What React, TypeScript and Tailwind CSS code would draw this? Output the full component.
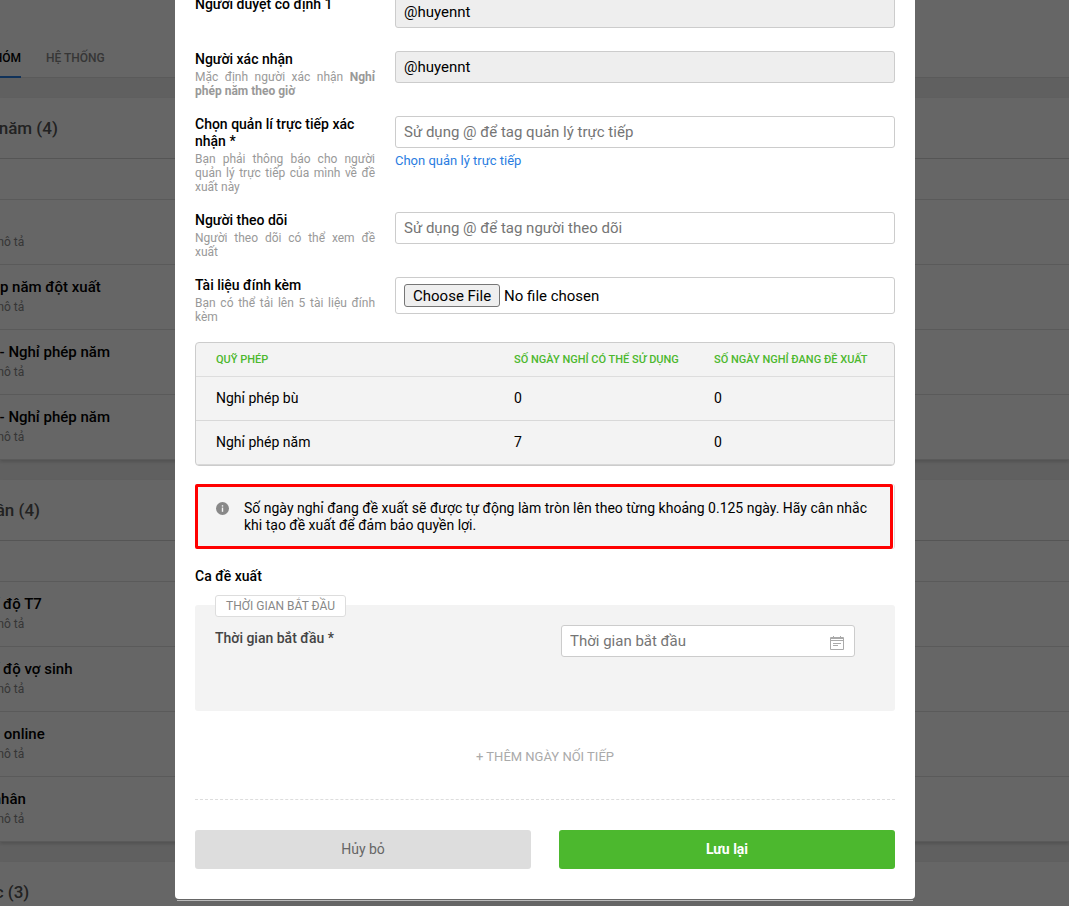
import type { ReactNode } from "react";

type Group = { title: string; items: string[] };

const groups: Group[] = [
  {
    title: "Nghỉ phép năm (4)",
    items: ["", "Nghỉ phép năm đột xuất", "Đi muộn - Nghỉ phép năm", "Đi muộn - Nghỉ phép năm"],
  },
  {
    title: "Việc cá nhân (4)",
    items: ["Nghỉ chế độ T7", "Nghỉ chế độ vợ sinh", "Làm việc online", "Việc cá nhân"],
  },
  { title: "Nhóm khác (3)", items: [] },
];

const funds = [
  { name: "Nghỉ phép bù", available: 0, requested: 0 },
  { name: "Nghỉ phép năm", available: 7, requested: 0 },
];

const field =
  "block h-8 w-full rounded-[3px] border border-[#ccc] px-2 text-[15px] text-black outline-none placeholder:text-[#757575]";

function GroupCard({ title, items }: Group) {
  return (
    <section className="mb-5 bg-white shadow-[0_2px_3px_rgba(0,0,0,0.15)]">
      <h2 className="flex h-[61px] items-center border-b border-[#d5d5d5] pt-0.5 text-[17px] font-medium text-[#555]">
        <span className="-ml-[83px] whitespace-nowrap">{title}</span>
      </h2>
      <div className="h-[41px] border-b border-[#e0e0e0]" />
      <ul>
        {items.map((name, i) => (
          <li key={i} className="h-[65px] border-b border-[#e0e0e0] pt-3">
            <div className="-ml-[60px] whitespace-nowrap">
              <div className="h-5 text-[15px] leading-5 font-medium text-black">{name}</div>
              <div className="text-xs leading-5 text-[#888]">Không có mô tả</div>
            </div>
          </li>
        ))}
      </ul>
    </section>
  );
}

function BackgroundPage() {
  return (
    <div className="absolute inset-0 overflow-hidden bg-[#f0f0f0]" aria-hidden="true">
      <nav className="mb-5 flex h-[78px] items-end border-b border-[#e0e0e0] bg-white text-xs font-medium">
        <a href="#group" tabIndex={-1} className="-mb-px -ml-[50px] flex h-10 w-[71px] items-center justify-end border-b-2 border-[#2a7de1] pt-0.5 whitespace-nowrap text-black">
          THEO NHÓM
        </a>
        <a href="#system" tabIndex={-1} className="-mb-px ml-[25px] flex h-10 items-center border-b-2 border-transparent pt-0.5 text-[#888]">
          HỆ THỐNG
        </a>
      </nav>
      {groups.map((g) => (
        <GroupCard key={g.title} {...g} />
      ))}
    </div>
  );
}

function Row({ id, label, hint, children }: { id: string; label: string; hint?: ReactNode; children: ReactNode }) {
  return (
    <div className="flex min-h-[55px] gap-5 pb-[18px]">
      <div className="w-[180px] shrink-0">
        <label htmlFor={id} className="block text-sm leading-[17px] font-medium text-black">
          {label}
        </label>
        {hint && <p className="mt-0.5 text-justify text-xs leading-[14px] text-[#999]">{hint}</p>}
      </div>
      <div className="min-w-0 flex-1">{children}</div>
    </div>
  );
}

function InfoIcon() {
  return (
    <svg className="mt-0.5 size-[13px] shrink-0" viewBox="0 0 13 13" aria-hidden="true">
      <circle cx="6.5" cy="6.5" r="6.5" fill="#888" />
      <rect x="5.8" y="3.2" width="1.4" height="1.4" fill="#f4f4f4" />
      <rect x="5.8" y="5.6" width="1.4" height="4.2" fill="#f4f4f4" />
    </svg>
  );
}

function CalendarIcon() {
  return (
    <svg className="size-4" viewBox="0 0 16 16" fill="none" stroke="#aaa" aria-hidden="true">
      <path d="M1.5 2.5h13v12h-13z" />
      <path d="M1 3.5h14M1 5.5h14" />
      <path d="M4.5 1v3M11.5 1v3" />
      <path d="M4 8.5h8M4 10.5h5" />
    </svg>
  );
}

function RequestForm() {
  return (
    <form
      role="dialog"
      aria-label="Tạo đề xuất"
      className="rounded-b-[4px] bg-white px-5 pb-[30px]"
      onSubmit={(e) => e.preventDefault()}
    >
      <Row id="approver" label="Người duyệt cố định 1">
        <input id="approver" className={`${field} bg-[#eee]`} defaultValue="@huyennt" readOnly />
      </Row>
      <Row
        id="confirmer"
        label="Người xác nhận"
        hint={
          <>
            Mặc định người xác nhận <b>Nghỉ phép năm theo giờ</b>
          </>
        }
      >
        <input id="confirmer" className={`${field} bg-[#eee]`} defaultValue="@huyennt" readOnly />
      </Row>
      <Row
        id="manager"
        label="Chọn quản lí trực tiếp xác nhận *"
        hint="Bạn phải thông báo cho người quản lý trực tiếp của mình về đề xuất này"
      >
        <input id="manager" className={`${field} bg-white`} placeholder="Sử dụng @ để tag quản lý trực tiếp" />
        <a href="#manager" className="mt-1 block text-[13px] leading-[18px] text-[#2a7de1]">
          Chọn quản lý trực tiếp
        </a>
      </Row>
      <Row id="follower" label="Người theo dõi" hint="Người theo dõi có thể xem đề xuất">
        <input id="follower" className={`${field} bg-white`} placeholder="Sử dụng @ để tag người theo dõi" />
      </Row>
      <Row id="files" label="Tài liệu đính kèm" hint="Bạn có thể tải lên 5 tài liệu đính kèm">
        <input
          id="files"
          type="file"
          className="block h-[37px] w-full rounded-[3px] border border-[#ccc] bg-white px-2 py-[6px] text-[15px] leading-[21px] text-black file:h-[23px] file:rounded-[3px] file:border file:border-solid file:border-[#767676] file:bg-[#efefef] file:px-2 file:pt-0.5 file:pb-0 file:leading-[19px]"
        />
      </Row>

      <div className="overflow-hidden rounded-[4px] border border-[#ccc] bg-[#f3f3f3]">
        <table className="w-full table-fixed border-separate border-spacing-0 text-left text-sm text-black">
          <thead>
            <tr className="text-[11px] font-medium text-[#4cb82e]">
              <th className="h-[34px] border-b border-[#ddd] pl-5 font-medium">QUỸ PHÉP</th>
              <th className="w-[200px] border-b border-[#ddd] font-medium">SỐ NGÀY NGHỈ CÓ THỂ SỬ DỤNG</th>
              <th className="w-[180px] border-b border-[#ddd] font-medium">SỐ NGÀY NGHỈ ĐANG ĐỀ XUẤT</th>
            </tr>
          </thead>
          <tbody>
            {funds.map((f) => (
              <tr key={f.name}>
                <td className="h-11 border-b border-[#d8d8d8] pb-0.5 pl-5">{f.name}</td>
                <td className="h-11 border-b border-[#d8d8d8] pb-0.5">{f.available}</td>
                <td className="h-11 border-b border-[#d8d8d8] pb-0.5">{f.requested}</td>
              </tr>
            ))}
          </tbody>
        </table>
      </div>

      <div className="mt-[18px] rounded-[3px] border-r border-[#ddd] pr-px">
        <div className="flex gap-[15px] rounded-[2px] border-3 border-[#f00] bg-[#f4f4f4] pt-[13px] pr-5 pb-3 pl-[18px] text-sm leading-[17px] text-black">
          <InfoIcon />
          <p>
            Số ngày nghỉ đang đề xuất sẽ được tự động làm tròn lên theo từng khoảng 0.125 ngày. Hãy cân nhắc khi tạo đề
            xuất để đảm bảo quyền lợi.
          </p>
        </div>
      </div>

      <h3 className="mt-[18px] text-sm leading-[18px] font-medium text-black">Ca đề xuất</h3>
      <div className="relative mt-5 flex h-[106px] items-start justify-between rounded-[3px] bg-[#f3f3f3] pt-5 pr-10 pl-5">
        <span className="absolute -top-[10px] left-5 rounded-[3px] border border-[#ddd] bg-white px-[10px] text-xs leading-5 text-[#888]">
          THỜI GIAN BẮT ĐẦU
        </span>
        <label htmlFor="start" className="pt-1 text-sm leading-[18px] font-medium text-[#444]">
          Thời gian bắt đầu *
        </label>
        <div className="relative w-[294px]">
          <input id="start" className={`${field} bg-white`} placeholder="Thời gian bắt đầu" />
          <span className="absolute top-[10px] right-[10px]">
            <CalendarIcon />
          </span>
        </div>
      </div>

      <div className="mt-9 flex justify-center border-b border-dashed border-[#ddd] pb-8">
        <button type="button" className="text-[13px] leading-5 text-[#aaa]">
          + THÊM NGÀY NỐI TIẾP
        </button>
      </div>

      <div className="mt-[30px] grid grid-cols-2 gap-7">
        <button type="button" className="h-[39px] rounded-[3px] bg-[#ddd] pb-0.5 text-sm text-[#666]">
          Hủy bỏ
        </button>
        <button type="submit" className="h-[39px] rounded-[3px] bg-[#4cb82e] pb-0.5 text-sm font-bold text-white">
          Lưu lại
        </button>
      </div>
    </form>
  );
}

export default function App() {
  return (
    <main className="relative h-screen overflow-hidden font-['Roboto',sans-serif]">
      <BackgroundPage />
      <div className="absolute inset-0 flex justify-center overflow-hidden bg-black/60 pl-[21px]">
        <div className="-mt-1 w-full max-w-[740px]">
          <RequestForm />
          <div className="mx-0.5 mt-px h-px bg-[#bbb]" />
        </div>
      </div>
    </main>
  );
}
